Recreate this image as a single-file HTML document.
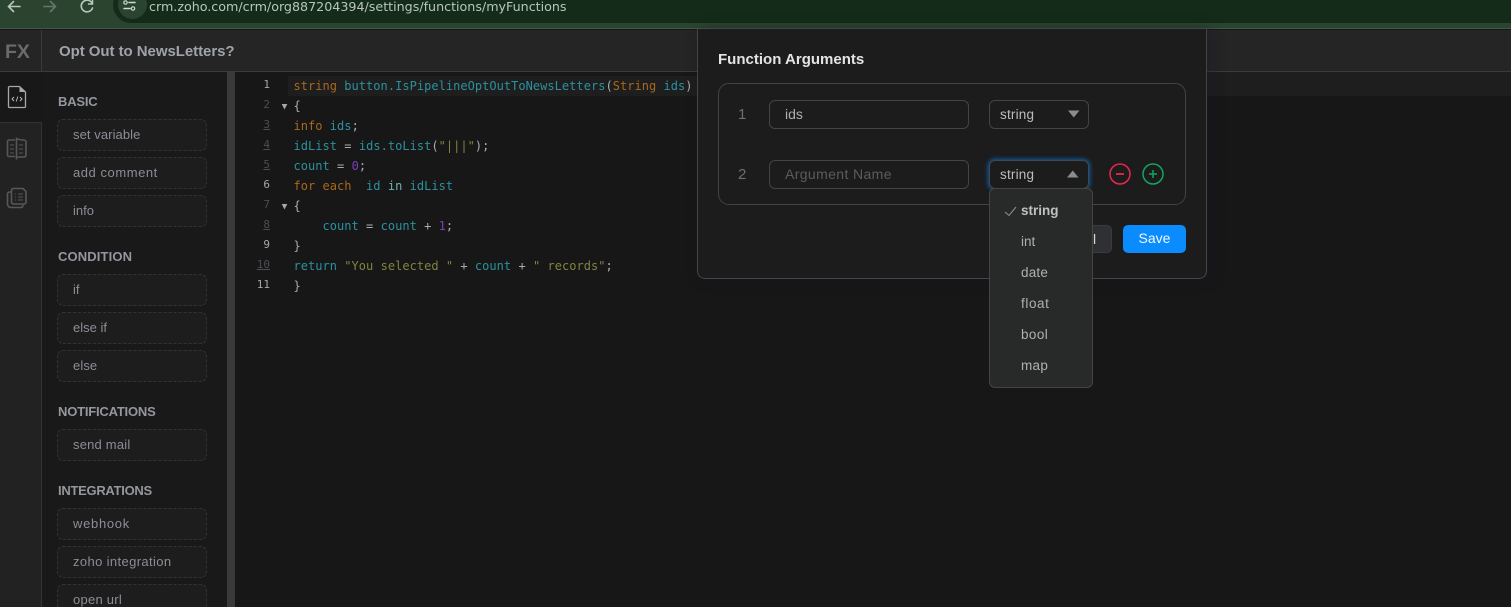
<!DOCTYPE html>
<html><head><meta charset="utf-8"><style>
html,body{margin:0;padding:0;width:1511px;height:607px;overflow:hidden;background:#171717}
body{position:relative;font-family:"Liberation Sans",sans-serif}
div,span,svg{position:absolute;box-sizing:border-box}
.t{white-space:nowrap;line-height:20px}
.h{left:58px;font-size:13px;font-weight:700;color:#94979d;letter-spacing:-.2px}
.b{left:57px;width:150px;height:32px;border:1px dashed #333;border-radius:6px;background:#1d1d1d;color:#8b8e96;font-size:13px;line-height:30px;padding-left:15px;white-space:nowrap}
.c{left:293.5px;font:12px/20px "DejaVu Sans Mono",monospace;letter-spacing:.03px;color:#2b919f;white-space:pre}
.c span{position:static}
.k{color:#a8681d}.s{color:#83833f}.n{color:#7b3fb8}.w{color:#a8adb3}.g{color:#6fb0b5}
.l{width:26px;left:244px;text-align:right;font:11px/20px "DejaVu Sans Mono",monospace;color:#4b4d52;white-space:pre}
.l.on{color:#a8a8a8}.u{text-decoration:underline}
.inp{left:769px;width:200px;height:29px;border:1px solid #444;border-radius:6px;font-size:14px;line-height:27px;padding-left:15px;color:#b0b0b0}
.sel{left:989px;width:100px;height:29px;border:1px solid #444;border-radius:6px;font-size:13.5px;line-height:27px;padding-left:10px;letter-spacing:.2px;color:#bdbdbd}
.o{left:1021px;font-size:13.5px;color:#b0b0b0;line-height:20px;white-space:nowrap}
</style></head><body>

<!-- browser bar -->
<div style="left:0;top:0;width:1511px;height:29px;background:#2b4430;border-bottom:1px solid #44584a"></div>
<div style="left:113px;top:-14px;width:1420px;height:37px;background:#142b19;border-radius:18px"></div>
<div style="left:118px;top:-10px;width:29px;height:29px;background:#2b4430;border-radius:50%"></div>
<svg style="left:0;top:0" width="150" height="24" viewBox="0 0 150 24" fill="none" stroke-linecap="round">
<path d="M20 6.5H9M13.5 1.5 8.5 6.5 13.5 11.5" stroke="#b9c8bc" stroke-width="1.6"/>
<path d="M44 6.5H55M50.5 1.5 55.5 6.5 50.5 11.5" stroke="#64786a" stroke-width="1.6"/>
<path d="M92 3A5.8 5.8 0 1 0 92.5 8" stroke="#b9c8bc" stroke-width="1.6"/>
<path d="M92.5 0V4H88.5" stroke="#b9c8bc" stroke-width="1.5"/>
<path d="M129 2.5H135M130 8.5H124" stroke="#d0d9d2" stroke-width="1.5"/>
<circle cx="125.5" cy="2.5" r="1.7" stroke="#d0d9d2" stroke-width="1.2"/>
<circle cx="133" cy="8.5" r="1.7" stroke="#d0d9d2" stroke-width="1.2"/>
</svg>
<div class="t" style="left:149px;top:-3px;letter-spacing:-.01px;color:#b9c5bb;font-family:'DejaVu Sans',sans-serif;font-size:12.7px">crm.zoho.com/crm/org887204394/settings/functions/myFunctions</div>

<!-- header -->
<div style="left:0;top:30px;width:1511px;height:42px;background:#252525;border-bottom:1px solid #3b3b3b"></div>
<div style="left:41px;top:30px;width:1px;height:41px;background:#3a3a3a"></div>
<div class="t" style="left:5px;top:42px;font-size:19.5px;font-weight:700;color:#6b6b6b">FX</div>
<div class="t" style="left:59px;top:42px;font-size:15px;font-weight:700;color:#a0a3aa;letter-spacing:-.05px">Opt Out to NewsLetters?</div>

<!-- rail -->
<div style="left:0;top:72px;width:42px;height:535px;background:#222;border-right:1px solid #333"></div>
<div style="left:0;top:72px;width:42px;height:51px;background:#181818;border-bottom:1px solid #333"></div>
<svg style="left:7px;top:85px" width="20" height="24" viewBox="0 0 20 24" fill="none">
<path d="M2.5 1.5H12.5L18.5 7V21.5A1 1 0 0 1 17.5 22.5H2.5A1 1 0 0 1 1.5 21.5V2.5A1 1 0 0 1 2.5 1.5Z" stroke="#a8a8a8" stroke-width="1.3"/>
<path d="M12.5 1.5V7H18.5Z" fill="#a8a8a8"/>
<path d="M7 12 5 14 7 16M13 12 15 14 13 16M10.8 11.5 9.2 16.5" stroke="#c0c0c0" stroke-width=".9"/>
</svg>
<svg style="left:6px;top:136px" width="22" height="24" viewBox="0 0 22 24" fill="none" stroke="#575757" stroke-width="1.6">
<path d="M9 4H3A1.5 1.5 0 0 0 1.5 5.5V19A1.5 1.5 0 0 0 3 20.5H9M10.5 1.5V23.5M10.5 3 16 4H18A2 2 0 0 1 20 6V19A2 2 0 0 1 18 21H10.5"/>
<path d="M4 9H8M4 13H8M4 17H8M13 9H17M13 13H17M13 17H17" stroke-width="1.1"/>
</svg>
<svg style="left:6px;top:187px" width="22" height="22" viewBox="0 0 22 22" fill="none" stroke="#575757" stroke-width="1.6">
<path d="M5.5 3A2 2 0 0 1 7.5 1.5H17L20 4.5V15A2 2 0 0 1 18 17H7.5A2 2 0 0 1 5.5 15Z"/>
<path d="M5 5H3.5A2 2 0 0 0 1.5 7V17A3.5 3.5 0 0 0 5 20.5H15A2 2 0 0 0 17 18.5V18"/>
<path d="M9 7H10M12 7H17M9 10H10M12 10H17M9 13H10M12 13H17" stroke-width="1.1"/>
</svg>

<!-- sidebar -->
<div style="left:42px;top:72px;width:185px;height:535px;background:#191919"></div>
<div style="left:227px;top:72px;width:8px;height:535px;background:#3a3a3a"></div>

<div class="t h" style="top:92px">BASIC</div>
<div class="b" style="top:119px;letter-spacing:.08px">set variable</div>
<div class="b" style="top:157px;letter-spacing:.55px">add comment</div>
<div class="b" style="top:195px">info</div>
<div class="t h" style="top:247px;letter-spacing:.13px">CONDITION</div>
<div class="b" style="top:274px">if</div>
<div class="b" style="top:312px">else if</div>
<div class="b" style="top:350px;letter-spacing:.1px">else</div>
<div class="t h" style="top:402px">NOTIFICATIONS</div>
<div class="b" style="top:429px;letter-spacing:.2px">send mail</div>
<div class="t h" style="top:481px;letter-spacing:-.28px">INTEGRATIONS</div>
<div class="b" style="top:508px;letter-spacing:.7px">webhook</div>
<div class="b" style="top:546px;letter-spacing:.37px">zoho integration</div>
<div class="b" style="top:584px;letter-spacing:.25px">open url</div>

<!-- editor -->
<div style="left:288px;top:76px;width:420px;height:20px;background:#1e1e1e"></div>
<div style="left:700px;top:72px;width:811px;height:24px;background:#1e1e1e"></div>
<div class="l on" style="top:75px">1</div>
<div class="l" style="top:95px">2</div>
<div class="l u" style="top:115px">3</div>
<div class="l u" style="top:135px">4</div>
<div class="l u" style="top:155px">5</div>
<div class="l on" style="top:175px">6</div>
<div class="l" style="top:195px">7</div>
<div class="l u" style="top:215px">8</div>
<div class="l on" style="top:235px">9</div>
<div class="l u" style="top:255px">10</div>
<div class="l on" style="top:275px">11</div>
<svg style="left:281px;top:103px" width="7" height="7"><path d="M.7 1H6.3L3.5 6.5Z" fill="#a8a8a8"/></svg>
<svg style="left:281px;top:203px" width="7" height="7"><path d="M.7 1H6.3L3.5 6.5Z" fill="#a8a8a8"/></svg>

<div class="c" style="top:76px"><span class="k">string</span> button.IsPipelineOptOutToNewsLetters<span class="w">(</span><span class="k">String</span> ids<span class="w">)</span></div>
<div class="c w" style="top:96px">{</div>
<div class="c" style="top:116px"><span class="k">info</span> ids<span class="w">;</span></div>
<div class="c" style="top:136px">idList <span class="w">=</span> ids.toList<span class="w">(</span><span class="s">"|||"</span><span class="w">);</span></div>
<div class="c" style="top:156px">count <span class="w">=</span> <span class="n">0</span><span class="w">;</span></div>
<div class="c" style="top:176px"><span class="k">for each</span>  id <span class="g">in</span> idList</div>
<div class="c w" style="top:196px">{</div>
<div class="c" style="top:216px">    count <span class="w">=</span> count <span class="w">+</span> <span class="n">1</span><span class="w">;</span></div>
<div class="c w" style="top:236px">}</div>
<div class="c" style="top:256px">return <span class="s">"You selected "</span> <span class="w">+</span> count <span class="w">+</span> <span class="s">" records"</span><span class="w">;</span></div>
<div class="c w" style="top:276px">}</div>

<!-- modal -->
<div style="left:697px;top:29px;width:510px;height:250px;background:#1c1c1c;border:1px solid #454545;border-top:none;border-radius:0 0 8px 8px;box-shadow:4px 0 14px rgba(20,24,40,.45)"></div>
<div class="t" style="left:718px;top:49px;font-size:15px;font-weight:700;color:#e4e4e4;letter-spacing:.01px;padding-top:1px">Function Arguments</div>
<div style="left:718px;top:83px;width:468px;height:122px;border:1px solid #434343;border-radius:11px"></div>

<div class="t" style="left:738px;top:105px;font-size:15px;color:#6f6f6f">1</div>
<div class="inp" style="top:100px">ids</div>
<div class="sel" style="top:100px">string</div>
<svg style="left:1068px;top:110px" width="12" height="8"><path d="M0 .5H11.5L5.75 7.5Z" fill="#8c8c8c"/></svg>

<div class="t" style="left:738px;top:165px;font-size:15px;color:#6f6f6f">2</div>
<div class="inp" style="top:160px;color:#5a5c61;letter-spacing:.38px">Argument Name</div>
<div class="sel" style="top:160px;border-color:#3c4a58;box-shadow:0 0 4px 1px #0f5fa8">string</div>
<svg style="left:1067px;top:170px" width="12" height="8"><path d="M0 7.5H11.5L5.75 .5Z" fill="#8c8c8c"/></svg>

<svg style="left:1109px;top:162px" width="56" height="24" fill="none" stroke-width="1.5">
<circle cx="11" cy="12" r="10" stroke="#e8274f"/><path d="M7 12H15" stroke="#e8274f" stroke-width="1.8"/>
<circle cx="44" cy="12" r="10" stroke="#12a561"/><path d="M40 12H48M44 8V16" stroke="#12a561" stroke-width="1.5"/>
</svg>

<!-- buttons -->
<div style="left:1040px;top:225px;width:72px;height:28px;background:#2f3034;border:1px solid #3a3b3f;border-radius:5px"></div>
<div class="t" style="left:1093px;top:229px;font-size:14px;color:#d8d8d8">l</div>
<div class="t" style="left:1123px;top:225px;width:63px;height:28px;background:#0a8cff;border-radius:5px;color:#f2f8ff;font-size:14px;line-height:27px;text-align:center">Save</div>

<!-- dropdown -->
<div style="left:989px;top:188px;width:104px;height:200px;background:#282a2a;border:1px solid #444;border-radius:6px"></div>
<svg style="left:1003px;top:204px" width="15" height="13" fill="none"><path d="M2 8 6 11.5 13 3" stroke="#8a8a8a" stroke-width="1.1"/></svg>
<div class="o" style="top:201px;font-weight:700;color:#c0c0c0">string</div>
<div class="o" style="top:232px">int</div>
<div class="o" style="top:263px;letter-spacing:.2px">date</div>
<div class="o" style="top:294px;letter-spacing:.6px">float</div>
<div class="o" style="top:325px;letter-spacing:.4px">bool</div>
<div class="o" style="top:356px;letter-spacing:.3px">map</div>

</body></html>
